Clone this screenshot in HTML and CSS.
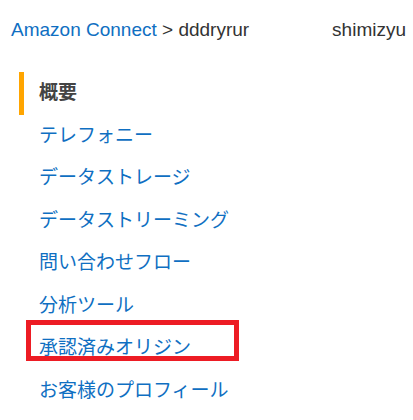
FILE: index.html
```html
<!DOCTYPE html>
<html lang="ja">
<head>
<meta charset="utf-8">
<link rel="stylesheet" href="styles.css">
</head>
<body>
<header class="crumbs">
  <div class="path"><a class="link">Amazon Connect</a> &gt; dddryrur</div>
  <div class="user">shimizyu</div>
</header>
<ul class="nav">
  <li class="item active">概要</li>
  <li class="item">テレフォニー</li>
  <li class="item">データストレージ</li>
  <li class="item">データストリーミング</li>
  <li class="item">問い合わせフロー</li>
  <li class="item">分析ツール</li>
  <li class="item marked">承認済みオリジン<span class="highlight"></span></li>
  <li class="item">お客様のプロフィール</li>
</ul>
</body>
</html>
```

FILE: styles.css
```css
html, body {
  margin: 0;
  padding: 0;
  background: #ffffff;
}
body {
  font-family: "Liberation Sans", "Noto Sans CJK JP", sans-serif;
  font-size: 19px;
  color: #333333;
}
.crumbs {
  display: flex;
  justify-content: space-between;
  padding: 19px 7px 0 11px;
  line-height: 22px;
  height: 22px;
}
.link {
  color: #0f6fc2;
}
.path {
  color: #333333;
}
.user {
  color: #333333;
}
.nav {
  list-style: none;
  margin: 31px 0 0 19px;
  padding: 0;
}
.item {
  line-height: 42.5px;
  height: 42.5px;
  padding-left: 15px;
  border-left: 5px solid transparent;
  color: #0f6fc2;
}
.item.active {
  border-left-color: #ffa500;
  color: #444444;
  font-weight: bold;
}
.marked {
  position: relative;
}
.highlight {
  position: absolute;
  left: 2px;
  top: -7px;
  width: 213px;
  height: 41px;
  box-sizing: border-box;
  border: 5px solid #ed1c24;
}
```
